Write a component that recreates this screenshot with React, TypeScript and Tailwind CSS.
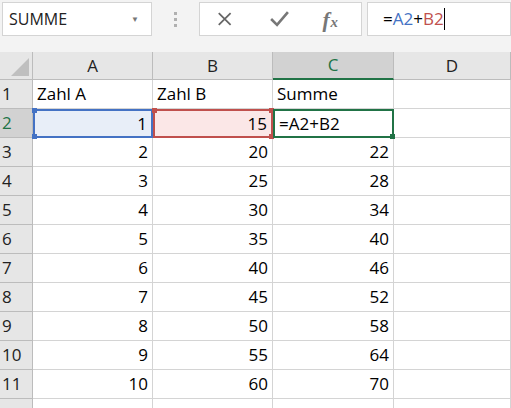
import React from "react";

const rows: [number, number, number][] = [
  [2, 20, 22],[3, 25, 28],[4, 30, 34],[5, 35, 40],[6, 40, 46],[7, 45, 52],[8, 50, 58],[9, 55, 64],[10, 60, 70],
];
const cols = "grid grid-cols-[33px_120px_120px_121px_117px]";
const cell = "h-[29px] border-r border-b border-[#d4d4d4] flex items-center px-1 text-[17px] text-black";
const sel = "h-[29px] flex items-center px-1 text-[17px] text-black relative border-2";
const rh = "h-[29px] bg-[#e6e6e6] border-r border-b border-[#bcbcbc] flex items-center pl-[2px] text-[17px] text-[#222]";

function Handle({ c, cls }: { c: string; cls: string }) {
  return <div className={`absolute w-[5px] h-[5px] ${cls}`} style={{ background: c }} />;
}

export default function App() {
  return (
    <div className="w-[511px] h-[408px] bg-white overflow-hidden" style={{ fontFamily: '"Open Sans", "Noto Sans", sans-serif' }}>
      <div className="h-[52px] bg-[#f3f3f3] flex pt-[2px] gap-0">
        <div className="ml-[2px] w-[150px] h-[34px] bg-white border border-[#d4d4d4] flex items-center pl-[6px] text-[16px] text-[#222]">
          <span className="flex-1">SUMME</span>
          <span className="text-[8px] text-[#777] mr-[12px]">▼</span>
        </div>
        <div className="w-[47px] flex justify-center pt-[10px]">
          <div className="flex flex-col gap-[3px]">
            <div className="w-[3px] h-[3px] bg-[#b0b0b0]" /><div className="w-[3px] h-[3px] bg-[#b0b0b0]" /><div className="w-[3px] h-[3px] bg-[#b0b0b0]" />
          </div>
        </div>
        <div className="w-[163px] h-[34px] bg-white border border-[#d4d4d4] flex items-center">
          <svg width="163" height="34" viewBox="0 0 163 34">
            <path d="M19 11 L31 23 M31 11 L19 23" stroke="#666" strokeWidth="1.8" />
            <path d="M72 17 L78 23 L89 10" stroke="#777" strokeWidth="2.6" fill="none" />
            <text x="124" y="25" fontFamily="Liberation Serif, serif" fontStyle="italic" fontWeight="bold" fontSize="22" fill="#777">f</text>
            <text x="132" y="25" fontFamily="Liberation Serif, serif" fontStyle="italic" fontWeight="bold" fontSize="15" fill="#777">x</text>
          </svg>
        </div>
        <div className="ml-[5px] flex-1 h-[34px] bg-white border border-[#d4d4d4] flex items-center pl-[15px] text-[17px]">
          <span className="text-black">=</span><span className="text-[#4472c4]">A2</span><span>+</span><span className="text-[#c0504d]">B2</span>
          <span className="w-px h-[22px] bg-black" />
        </div>
      </div>
      <div className={cols}>
        <div className="h-[28px] bg-[#e6e6e6] border-r border-b border-[#bcbcbc] relative">
          <svg className="absolute right-[2px] bottom-[2px]" width="20" height="20"><path d="M19 1 L19 19 L1 19 Z" fill="#bfbfbf" /></svg>
        </div>
        {["A", "B", "C", "D"].map((l) => (
          <div key={l} className={`h-[28px] flex items-center justify-center text-[17px] border-r ${l === "C" ? "bg-[#d2d2d2] text-[#217346] border-b-2 border-b-[#217346] border-r-[#bcbcbc]" : "bg-[#e6e6e6] text-[#222] border-b border-[#bcbcbc]"}`}>{l}</div>
        ))}
        <div className={rh}>1</div>
        <div className={cell}>Zahl A</div>
        <div className={cell}>Zahl B</div>
        <div className={cell}>Summe</div>
        <div className={cell}></div>
        <div className="h-[29px] bg-[#d2d2d2] border-r border-b border-[#bcbcbc] flex items-center pl-[2px] text-[17px] text-[#217346]">2</div>
        <div className={`${sel} justify-end bg-[#e8eef8] border-[#4472c4]`}>1
          <Handle c="#4472c4" cls="-left-[3px] -top-[3px]" /><Handle c="#4472c4" cls="-left-[3px] -bottom-[3px]" />
        </div>
        <div className={`${sel} justify-end bg-[#fbe7e7] border-[#c0504d]`}>15
          <Handle c="#c0504d" cls="-left-[3px] -top-[3px]" /><Handle c="#c0504d" cls="-right-[3px] -top-[3px]" /><Handle c="#c0504d" cls="-right-[3px] -bottom-[3px]" />
        </div>
        <div className={`${sel} border-[#217346]`}>=A2+B2
          <Handle c="#217346" cls="-right-[3px] -bottom-[3px]" />
        </div>
        <div className={cell}></div>
        {rows.map(([a, b, c], i) => (
          <React.Fragment key={i}>
            <div className={rh}>{i + 3}</div>
            <div className={`${cell} justify-end`}>{a}</div>
            <div className={`${cell} justify-end`}>{b}</div>
            <div className={`${cell} justify-end`}>{c}</div>
            <div className={cell}></div>
          </React.Fragment>
        ))}
        <div className={rh}></div><div className={cell}></div><div className={cell}></div><div className={cell}></div><div className={cell}></div>
      </div>
    </div>
  );
}
